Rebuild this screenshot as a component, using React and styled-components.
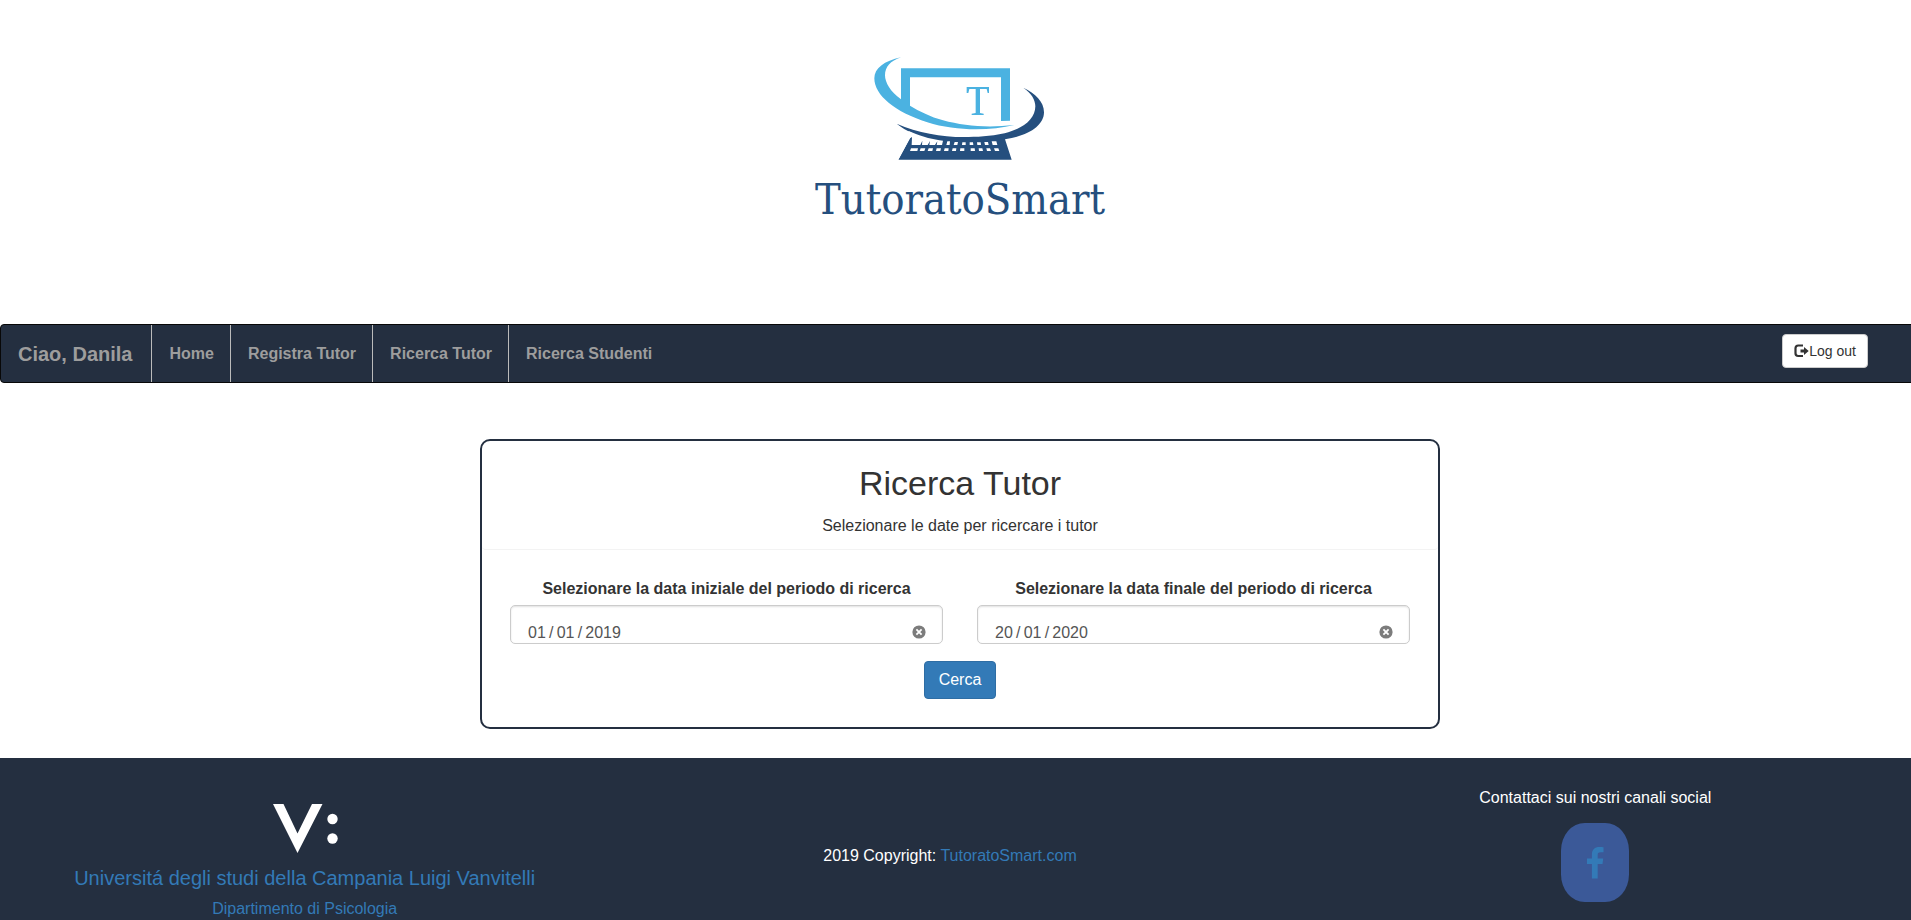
import React, { useState } from "react";
import styled, { createGlobalStyle } from "styled-components";

const navy = "#242f40";
const link = "#337ab7";

const GlobalStyle = createGlobalStyle`
  *, *::before, *::after { box-sizing: border-box; }
  body {
    margin: 0;
    background: #fff;
    color: #333;
    font-family: "Liberation Sans", Arial, sans-serif;
    font-size: 16px;
    line-height: 22px;
  }
  button, input { font: inherit; }
  h1, p { margin: 0; }
`;

const Viewport = styled.div`
  overflow: hidden;
`;

const Page = styled.div`
  margin-right: -9px;
`;

const Banner = styled.header`
  display: flex;
  flex-direction: column;
  align-items: center;
  padding: 45px 0 98px;
`;

const LogoMark = styled.svg`
  display: block;
  width: 200px;
  height: 125px;
`;

const LogoName = styled.div`
  padding-top: 2px;
  color: #254f7e;
  font-family: "DejaVu Serif Condensed", "DejaVu Serif", serif;
  font-size: 43px;
  line-height: 54px;
`;

const Navbar = styled.nav`
  display: flex;
  align-items: stretch;
  min-height: 59px;
  background: ${navy};
  border: 1px solid #080808;
  border-radius: 4px;
`;

const NavLink = styled.a`
  display: flex;
  align-items: center;
  padding: ${(p) => (p.$brand ? "0 19px 0 17px" : "0 16px 0 17px")};
  color: #9d9d9d;
  font-size: ${(p) => (p.$brand ? "20px" : "16px")};
  font-weight: bold;
  text-decoration: none;
  border-right: ${(p) => (p.$last ? "0" : "1px solid #bbb")};
`;

const LogoutButton = styled.button`
  display: flex;
  align-items: center;
  align-self: flex-start;
  height: 34px;
  margin: 9px 51px 0 auto;
  padding: 0 11px;
  color: #333;
  background: #fff;
  border: 1px solid #ccc;
  border-radius: 4px;
  font-size: 14px;
  svg { width: 15px; height: 14px; }
`;

const Card = styled.main`
  width: 50%;
  margin: 56px auto 29px;
  background: #fff;
  border: 2px solid ${navy};
  border-radius: 10px;
`;

const CardHeader = styled.div`
  padding: 22px 28px 12px;
  text-align: center;
  border-bottom: 1px solid #f3f3f3;
  border-radius: 4px;
`;

const Title = styled.h1`
  margin-bottom: 12px;
  font-size: 34px;
  font-weight: 400;
  line-height: 40px;
`;

const SearchForm = styled.form`
  display: flex;
  flex-direction: column;
  align-items: center;
  gap: 17px;
  padding: 28px;
`;

const Fields = styled.div`
  display: grid;
  grid-template-columns: 1fr 1fr;
  gap: 34px;
  width: 100%;
`;

const Field = styled.div`
  display: flex;
  flex-direction: column;
  gap: 5px;
  text-align: center;
`;

const Label = styled.label`
  font-weight: bold;
`;

const DateBox = styled.div`
  display: flex;
  align-items: flex-start;
  height: 39px;
  padding: 16px 16px 0 17px;
  border: 1px solid #ccc;
  border-radius: 5px;
  box-shadow: inset 0 1px 2px rgba(0, 0, 0, 0.12);
`;

const DateInput = styled.input`
  flex: 1;
  min-width: 0;
  height: 21px;
  padding: 0;
  color: #555;
  background: none;
  border: 0;
  outline: 0;
`;

const ClearButton = styled.button`
  display: flex;
  align-items: center;
  height: 19px;
  padding: 0;
  background: none;
  border: 0;
  svg { width: 14px; height: 14px; }
`;

const SubmitButton = styled.button`
  height: 38px;
  padding: 0 14px;
  color: #fff;
  background: ${link};
  border: 1px solid #2e6da4;
  border-radius: 4px;
`;

const Footer = styled.footer`
  background: ${navy};
  color: #fff;
`;

const FooterColumns = styled.div`
  display: grid;
  grid-template-columns: repeat(3, 1fr);
  margin: 0 2px 0 -18px;
`;

const FooterColumn = styled.div`
  display: flex;
  flex-direction: column;
  align-items: center;
  padding-top: ${(p) => p.$top}px;
`;

const FooterLink = styled.a`
  color: ${link};
  text-decoration: none;
`;

const UniversityLink = styled(FooterLink)`
  display: flex;
  flex-direction: column;
  align-items: center;
  gap: 14px;
  margin-bottom: 9px;
  font-size: 20px;
  svg { width: 66px; height: 49px; }
`;

const SocialLink = styled(FooterLink)`
  display: flex;
  align-items: center;
  justify-content: center;
  width: 68px;
  height: 79px;
  margin-top: 14px;
  background: #3b5998;
  border-radius: 35%;
  svg { width: 18px; height: 32px; }
`;

function Logo() {
  return (
    <LogoMark viewBox="0 0 600 375" aria-hidden="true">
      <g fill="#4bb2e1">
        <path d="M123 37C72 48 43 70 43 100C43 151 105 201 202 232C286 259 390 258 463 240C382 249 312 243 249 226C211 215 178 199 150 182V97H423V228L450 227V70H123V163C91 140 75 112 75 91C75 66 91 48 123 37Z" />
        <path d="M320 126H387V144H383L380 132H360V204L371 206V210H335V206L347 204V132H328L325 144H320Z" />
      </g>
      <path
        fill="#254f7e"
        d="M490 128C515 145 526 165 526 184C526 222 490 251 434 265C390 275 350 276 312 276C243 276 174 263 110 236C125 248 140 257 155 263V270L115 344H455L435 283C503 273 552 243 552 202C552 170 526 145 490 128Z"
      />
      <g fill="#fff">
        <path d="M155 262C190 277 220 284 249 287L246 300H230L232 289L225 300H208L210 288L203 300H186L187 287L181 300H155L156 276L150 280L115 344L100 344L146 258Z" />
        <path d="M262 289H270L269 300H259ZM284 291H294L292 300H281ZM307 292H317V300H306ZM329 292H339L340 300H329ZM351 292H362L363 300H352ZM373 291H384L386 300H375ZM395 289H409L412 300H398Z" />
        <path d="M153 310H174L172 318H150ZM182 310H196L193 318H179ZM206 310H219L217 318H203ZM230 310H243L241 318H228ZM254 310H266L265 318H252ZM278 310H289L288 318H276ZM301 310H313V318H300ZM332 310H344L345 318H332ZM356 310H367L369 318H357ZM379 310H390L393 318H381ZM402 310H415L418 318H405Z" />
      </g>
    </LogoMark>
  );
}

function LogoutIcon() {
  return (
    <svg viewBox="0 0 15 14" aria-hidden="true">
      <path d="M9 1.5H4.2Q1.5 1.5 1.5 4.2V9.3Q1.5 12 4.2 12H9" fill="none" stroke="#333" strokeWidth="2.2" />
      <path d="M6.5 5.4H10V3L14.7 7L10 11V8.6H6.5Z" fill="#333" />
    </svg>
  );
}

function DateField({ id, label, initial }) {
  const [value, setValue] = useState(initial);
  return (
    <Field>
      <Label htmlFor={id}>{label}</Label>
      <DateBox>
        <DateInput id={id} value={value} onChange={(e) => setValue(e.target.value)} />
        <ClearButton type="button" aria-label="Cancella" onClick={() => setValue("")}>
          <svg viewBox="0 0 14 14" aria-hidden="true">
            <circle cx="7" cy="7" r="6.6" fill="#7c7c7c" />
            <path d="M4.4 4.4L9.6 9.6M9.6 4.4L4.4 9.6" stroke="#fff" strokeWidth="1.8" />
          </svg>
        </ClearButton>
      </DateBox>
    </Field>
  );
}

export default function App() {
  return (
    <Viewport>
      <GlobalStyle />
      <Page>
        <Banner>
          <Logo />
          <LogoName>TutoratoSmart</LogoName>
        </Banner>
        <Navbar>
          <NavLink $brand href="#profilo">Ciao, Danila</NavLink>
          <NavLink href="#home">Home</NavLink>
          <NavLink href="#registra">Registra Tutor</NavLink>
          <NavLink href="#tutor">Ricerca Tutor</NavLink>
          <NavLink $last href="#studenti">Ricerca Studenti</NavLink>
          <LogoutButton type="button">
            <LogoutIcon />
            Log out
          </LogoutButton>
        </Navbar>
        <Card>
          <CardHeader>
            <Title>Ricerca Tutor</Title>
            <p>Selezionare le date per ricercare i tutor</p>
          </CardHeader>
          <SearchForm onSubmit={(e) => e.preventDefault()}>
            <Fields>
              <DateField
                id="inizio"
                label="Selezionare la data iniziale del periodo di ricerca"
                initial={"01\u2009/\u200901\u2009/\u20092019"}
              />
              <DateField
                id="fine"
                label="Selezionare la data finale del periodo di ricerca"
                initial={"20\u2009/\u200901\u2009/\u20092020"}
              />
            </Fields>
            <SubmitButton type="submit">Cerca</SubmitButton>
          </SearchForm>
        </Card>
        <Footer>
          <FooterColumns>
            <FooterColumn $top={46}>
              <UniversityLink href="#universita">
                <svg viewBox="0 0 66 49" aria-label="Vanvitelli">
                  <path d="M1 0H11.5L25.5 29.5L40 0H50.5L25.5 49Z" fill="#fff" />
                  <circle cx="60.5" cy="15" r="5.2" fill="#fff" />
                  <circle cx="60.5" cy="34.5" r="5.2" fill="#fff" />
                </svg>
                Universitá degli studi della Campania Luigi Vanvitelli
              </UniversityLink>
              <FooterLink href="#dipartimento">Dipartimento di Psicologia</FooterLink>
            </FooterColumn>
            <FooterColumn $top={87}>
              <p>
                2019 Copyright: <FooterLink href="#tutoratosmart">TutoratoSmart.com</FooterLink>
              </p>
            </FooterColumn>
            <FooterColumn $top={29}>
              <p>Contattaci sui nostri canali social</p>
              <SocialLink href="#facebook" aria-label="Facebook">
                <svg viewBox="0 0 18 32" aria-hidden="true">
                  <path
                    d="M17.5 0.3V5.3H14.5C12.2 5.3 11.7 6.4 11.7 8V11.5H17.2L16.5 17.1H11.7V31.5H5.9V17.1H1V11.5H5.9V7.4C5.9 2.6 8.9 0 13.2 0C15.3 0 17 0.2 17.5 0.3Z"
                    fill={link}
                  />
                </svg>
              </SocialLink>
            </FooterColumn>
          </FooterColumns>
        </Footer>
      </Page>
    </Viewport>
  );
}
